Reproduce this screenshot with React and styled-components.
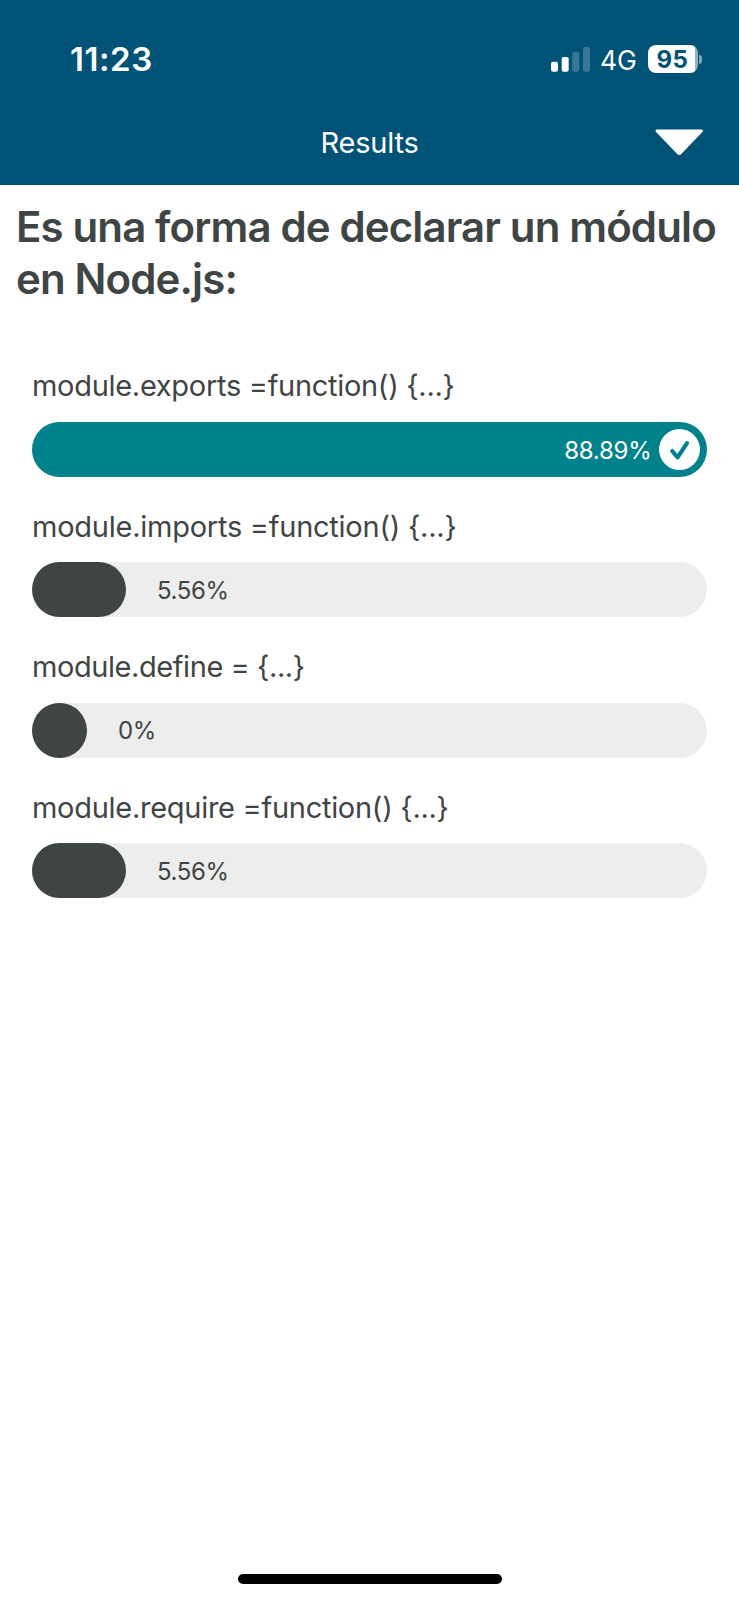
import React from "react";
import styled, { createGlobalStyle } from "styled-components";

const GlobalStyle = createGlobalStyle`
  *, *::before, *::after { box-sizing: border-box; }
  body {
    margin: 0;
    background: #fff;
    font-family: Inter, "Liberation Sans", sans-serif;
    font-feature-settings: "calt" 0;
  }
`;

const Screen = styled.div`
  display: flex;
  flex-direction: column;
  width: 739px;
  height: 1600px;
  background: #fff;
  color: #3f4544;
`;

const Header = styled.header`
  height: 185px;
  background: #005276;
  color: #fff;
`;

const StatusBar = styled.div`
  display: flex;
  align-items: center;
  justify-content: space-between;
  height: 100px;
  padding: 18px 37px 0 70px;
`;

const Clock = styled.time`
  font-size: 33px;
  font-weight: 600;
  line-height: 40px;
  letter-spacing: 0.55px;
`;

const StatusIcons = styled.div`
  display: flex;
  align-items: center;
`;

const Network = styled.span`
  width: 37px;
  margin: 1px 11px 0 10px;
  font-size: 26.5px;
  line-height: 32px;
  letter-spacing: 0;
  white-space: nowrap;
`;

const Battery = styled.div`
  display: flex;
  align-items: center;
`;

const BatteryBody = styled.div`
  width: 50px;
  height: 28px;
  padding-right: 1px;
  border-radius: 8px;
  background: linear-gradient(to right, #fff 47px, #8fb3c3 47px);
  color: #005276;
  font-size: 24px;
  font-weight: 700;
  line-height: 29px;
  letter-spacing: 0.5px;
  text-align: center;
`;

const BatteryTip = styled.div`
  width: 3px;
  height: 9px;
  margin-left: 1px;
  border-radius: 0 4px 4px 0;
  background: #7fa8ba;
`;

const TitleBar = styled.div`
  display: grid;
  grid-template-columns: 1fr auto 1fr;
  align-items: center;
  height: 84px;
  padding: 0 35px;
`;

const Title = styled.h1`
  grid-column: 2;
  margin: 0;
  padding-top: 1px;
  font-size: 29px;
  font-weight: 400;
  line-height: 36px;
  letter-spacing: -0.2px;
`;

const CollapseButton = styled.button`
  justify-self: end;
  display: flex;
  padding: 0;
  border: 0;
  background: none;
`;

const Question = styled.h2`
  margin: 0;
  padding: 16px 0 0 16px;
  font-size: 42px;
  font-weight: 600;
  line-height: 52px;
  letter-spacing: -0.87px;
  white-space: nowrap;
`;

const Answers = styled.ul`
  display: flex;
  flex-direction: column;
  gap: 30.45px;
  margin: 62px 32px 0;
  padding: 0;
  list-style: none;
`;

const Answer = styled.li`
  height: 110px;
`;

const AnswerLabel = styled.div`
  height: 55px;
  padding-top: 0.2px;
  font-size: 29px;
  line-height: 38px;
  letter-spacing: ${(p) => p.$tracking}px;
  white-space: nowrap;
`;

const Track = styled.div`
  display: flex;
  align-items: center;
  height: 55px;
  border-radius: 28px;
  background: #ededed;
`;

const Fill = styled.div`
  display: flex;
  align-items: center;
  justify-content: flex-end;
  height: 100%;
  padding-right: ${(p) => (p.$correct ? "7px" : "0")};
  border-radius: 28px;
  background: ${(p) => (p.$correct ? "#00828c" : "#3f4544")};
`;

const Percent = styled.span`
  margin: ${(p) => (p.$inside ? "0 7.5px 0 0" : "0 0 0 31px")};
  padding-top: 2px;
  color: ${(p) => (p.$inside ? "#fff" : "inherit")};
  font-size: 24px;
  line-height: 30px;
  letter-spacing: ${(p) => (p.$inside ? "-0.25px" : "-0.4px")};
`;

const HomeIndicator = styled.div`
  align-self: center;
  width: 264px;
  height: 10px;
  margin: auto 0 16px;
  border-radius: 5px;
  background: #000;
`;

const ANSWERS = [
  { label: "module.exports =function() {...}", value: "88.89%", width: 675, correct: true, tracking: -0.3 },
  { label: "module.imports =function() {...}", value: "5.56%", width: 94, tracking: -0.25 },
  { label: "module.define = {...}", value: "0%", width: 55, tracking: -0.43 },
  { label: "module.require =function() {...}", value: "5.56%", width: 94, tracking: -0.28 },
];

function SignalIcon() {
  return (
    <svg width="39" height="25" viewBox="0 0 39 25" fill="#fff">
      <rect x="0" y="14.7" width="7" height="10" rx="2" />
      <rect x="10.7" y="10" width="7" height="14.7" rx="2" />
      <rect x="21.3" y="5" width="7" height="19.7" rx="2" opacity="0.22" />
      <rect x="32" y="0" width="7" height="24.7" rx="2" opacity="0.22" />
    </svg>
  );
}

function TriangleIcon() {
  return (
    <svg width="49" height="27" viewBox="0 0 50 27" preserveAspectRatio="none" fill="#fff">
      <path d="M2.2 0.5H47.3C49 0.5 49.5 2 48.4 3.1L26.8 25C25.6 26.2 23.9 26.2 22.7 25L1.1 3.1C0 2 0.5 0.5 2.2 0.5Z" />
    </svg>
  );
}

function CheckIcon() {
  return (
    <svg width="41" height="41" viewBox="0 0 41 41">
      <circle cx="20.5" cy="20.5" r="20.5" fill="#fff" />
      <path
        d="M13.2 22L18.6 28.3L28 14.2"
        fill="none"
        stroke="#00828c"
        strokeWidth="4.2"
        strokeLinecap="round"
        strokeLinejoin="round"
      />
    </svg>
  );
}

function AnswerRow({ answer }) {
  return (
    <Answer>
      <AnswerLabel $tracking={answer.tracking}>{answer.label}</AnswerLabel>
      <Track>
        <Fill $correct={answer.correct} style={{ width: answer.width }}>
          {answer.correct && (
            <>
              <Percent $inside>{answer.value}</Percent>
              <CheckIcon />
            </>
          )}
        </Fill>
        {!answer.correct && <Percent>{answer.value}</Percent>}
      </Track>
    </Answer>
  );
}

export default function App() {
  return (
    <>
      <GlobalStyle />
      <Screen>
        <Header>
          <StatusBar>
            <Clock>11:23</Clock>
            <StatusIcons>
              <SignalIcon />
              <Network>4G</Network>
              <Battery>
                <BatteryBody>95</BatteryBody>
                <BatteryTip />
              </Battery>
            </StatusIcons>
          </StatusBar>
          <TitleBar>
            <Title>Results</Title>
            <CollapseButton aria-label="Collapse">
              <TriangleIcon />
            </CollapseButton>
          </TitleBar>
        </Header>
        <Question>
          Es una forma de declarar un módulo
          <br />
          en Node.js:
        </Question>
        <Answers>
          {ANSWERS.map((answer) => (
            <AnswerRow key={answer.label} answer={answer} />
          ))}
        </Answers>
        <HomeIndicator />
      </Screen>
    </>
  );
}
